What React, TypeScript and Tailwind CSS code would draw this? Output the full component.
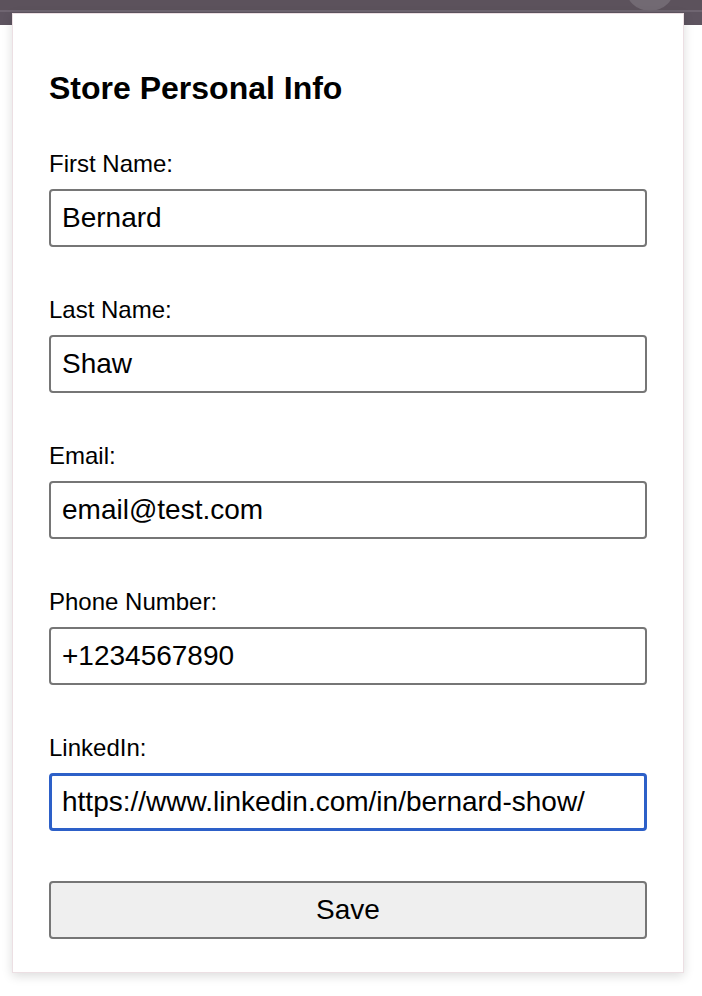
import React, { useState } from 'react';

const fields = [
  { id: 'firstName', label: 'First Name:', value: 'Bernard' },
  { id: 'lastName', label: 'Last Name:', value: 'Shaw' },
  { id: 'email', label: 'Email:', value: 'email@test.com' },
  { id: 'phone', label: 'Phone Number:', value: '+1234567890' },
  { id: 'linkedin', label: 'LinkedIn:', value: 'https://www.linkedin.com/in/bernard-show/' },
];

const App: React.FC = () => {
  const [values, setValues] = useState<Record<string, string>>(
    Object.fromEntries(fields.map((f) => [f.id, f.value]))
  );

  return (
    <div className="relative min-h-[996px] w-[702px] bg-white overflow-hidden font-['Liberation_Sans',Arial,sans-serif] text-black">
      {/* Browser toolbar behind the popup */}
      <div className="absolute inset-x-0 top-0 h-[25px] bg-[#5e5460]">
        <div className="h-[10px] bg-[#5c525c]" />
        <div className="h-[2px] bg-[#6f6571]" />
        <div className="absolute left-[625px] top-[-39px] w-[50px] h-[50px] rounded-full bg-[#726a73]" />
      </div>

      {/* Popup */}
      <div className="relative mt-[13px] ml-[12px] w-[672px] bg-white border border-[#ecdfe3] shadow-[0_3px_10px_rgba(0,0,0,0.14)] px-[36px] pt-[56px] pb-[33px]">
        <h2 className="text-[32px] leading-[37px] font-bold mb-[43px]">Store Personal Info</h2>

        {fields.map((f, i) => {
          const focused = f.id === 'linkedin';
          return (
            <div key={f.id} className={i < fields.length - 1 ? 'mb-[49px]' : ''}>
              <label htmlFor={f.id} className="block text-[24px] leading-[28px] mb-[11px]">
                {f.label}
              </label>
              <input
                id={f.id}
                value={values[f.id]}
                onChange={(e) => setValues({ ...values, [f.id]: e.target.value })}
                className={`block w-full h-[58px] rounded-[4px] bg-white text-[28px] outline-none ${
                  focused
                    ? 'border-[3px] border-[#2d60c8] pl-[10px]'
                    : 'border-2 border-[#767676] pl-[11px]'
                }`}
              />
            </div>
          );
        })}

        <button className="mt-[50px] block w-full h-[58px] rounded-[4px] border-2 border-[#767676] bg-[#efefef] text-[28px]">
          Save
        </button>
      </div>
    </div>
  );
};

export default App;
